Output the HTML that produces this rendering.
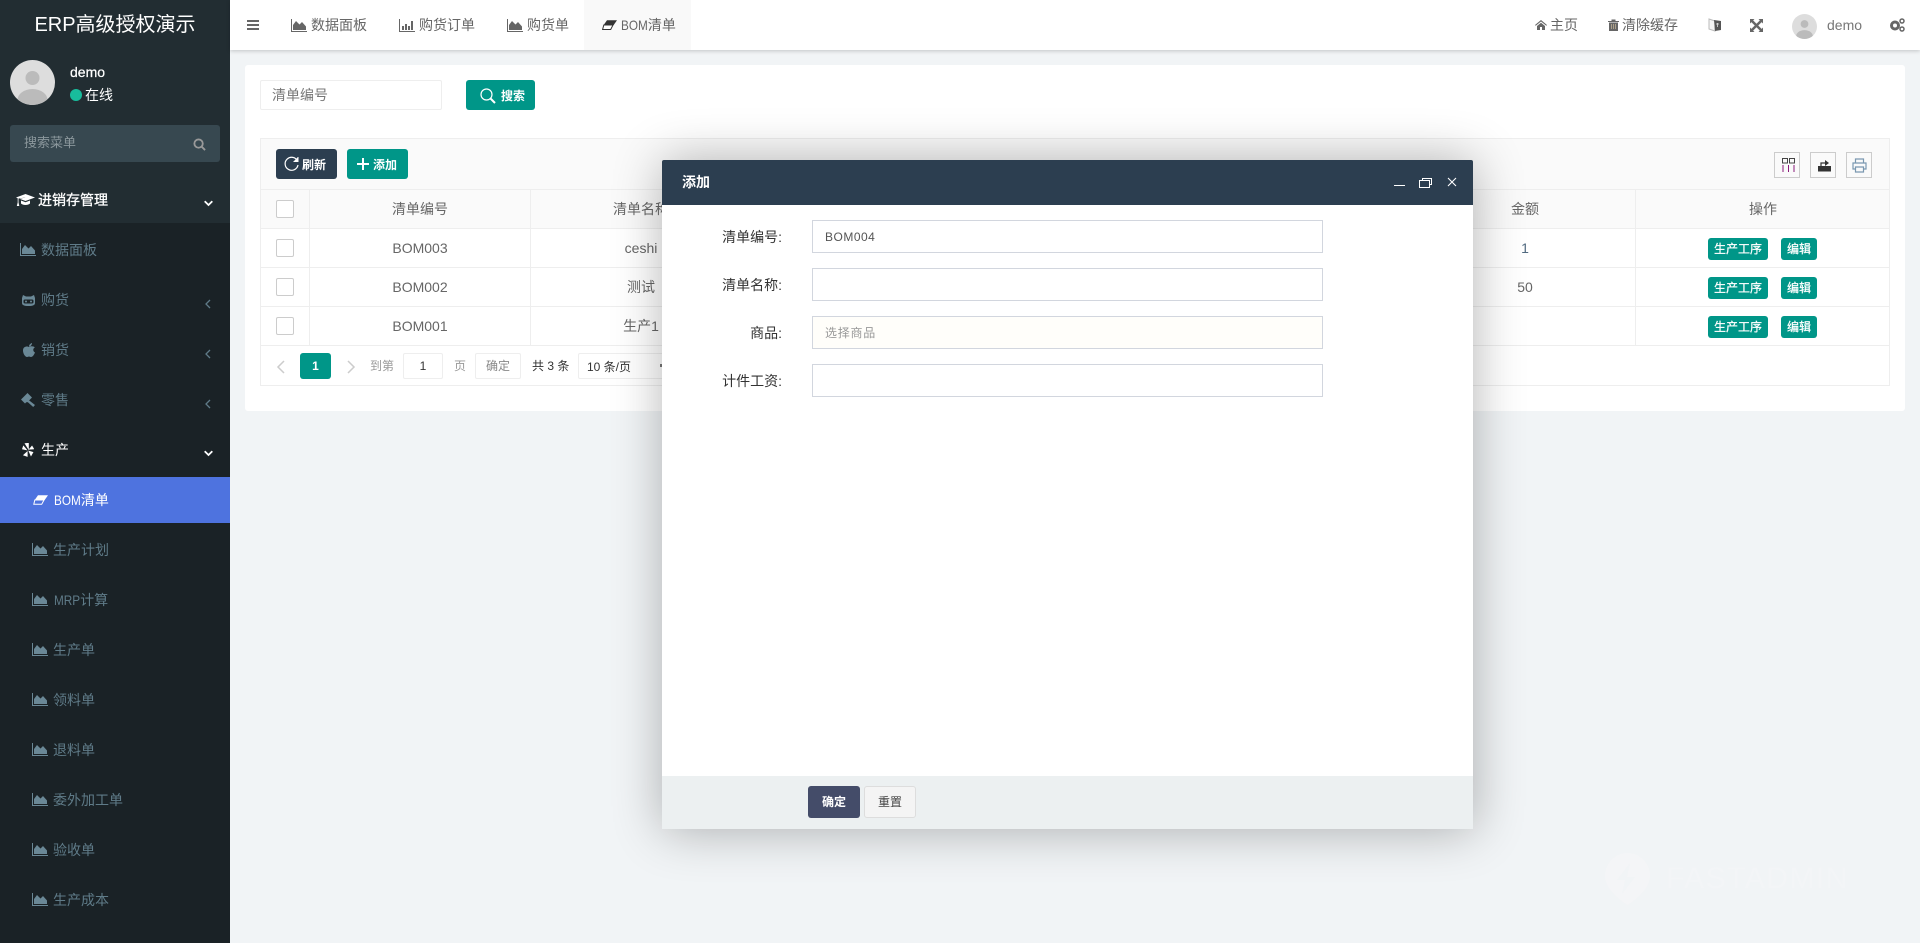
<!DOCTYPE html>
<html lang="zh-CN"><head><meta charset="utf-8"><title>BOM清单</title>
<style>
*{box-sizing:border-box}
html,body{margin:0;padding:0;width:1920px;height:943px;overflow:hidden;background:#f1f4f6;font-family:"Liberation Sans","Noto Sans CJK SC",sans-serif;font-size:14px;color:#666}
.a,.t,svg.i{position:absolute}
.t{white-space:nowrap;line-height:20px;height:20px}
.c{transform:translateX(-50%)}
.m{color:#5f7b88}
.b{font-weight:bold}
.s{display:inline-block;font-size:14px;transform:scaleX(.84);transform-origin:left center;margin-right:-5px}
.btn{position:absolute;border-radius:3px;color:#fff;font-weight:bold;font-size:12px;text-align:center;white-space:nowrap}
.op{position:absolute;border-radius:3px;color:#fff;font-size:12px;text-align:center;white-space:nowrap;height:22px;line-height:22px;background:#009688;-webkit-text-stroke:.25px #fff}
.h{position:absolute;height:1px;background:#eee;left:260px;width:1630px}
.v{position:absolute;width:1px;background:#eee;top:189px;height:156px}
.cb{position:absolute;left:276px;width:18px;height:18px;border:1px solid #ccc;border-radius:2px;background:#fff}
.inp{position:absolute;left:812px;width:511px;height:33px;border:1px solid #d2d6de;background:#fff;padding:0 12px;line-height:33px;font-size:12px;color:#555}
.lab{position:absolute;right:1138px;color:#333;line-height:20px;white-space:nowrap}
.ic{fill:#6a8896}
</style></head><body>
<svg width="0" height="0" style="position:absolute"><defs>
<symbol id="area" viewBox="0 0 16 13"><path d="M0 0h1v12h15v1H0z"/><path d="M2 11V6l3-4 3.500 3.500L11 3l4 4.500V11z"/></symbol>
<symbol id="bars" viewBox="0 0 16 13"><path d="M0 0h1v12h15v1H0z"/><path d="M3 7h2v4H3zM6 5h2v6H6zM9 7h2v4H9zM12 2h2v9h-2z"/></symbol>
</defs></svg>

<!-- sidebar -->
<div class="a" style="left:0;top:0;width:230px;height:223px;background:#222d32"></div>
<div class="a" style="left:0;top:223px;width:230px;height:720px;background:#1a2226"></div>
<div class="t" style="left:115px;top:13px;line-height:24px;height:24px;font-size:20px;color:#fff;transform:translateX(-50%)">ERP高级授权演示</div>
<svg class="i" style="left:10px;top:60px" width="45" height="45" viewBox="0 0 45 45"><defs><clipPath id="cp1"><circle cx="22.500" cy="22.500" r="22.500"/></clipPath></defs><circle cx="22.500" cy="22.500" r="22.500" fill="#dddddd"/><circle cx="22.500" cy="18" r="7" fill="#bbb"/><ellipse cx="22.500" cy="40" rx="15" ry="11" fill="#bbb" clip-path="url(#cp1)"/></svg>
<div class="t" style="left:70px;top:62px;color:#fff;font-size:14px;-webkit-text-stroke:.25px #fff">demo</div>
<div class="a" style="left:70px;top:89px;width:12px;height:12px;border-radius:50%;background:#18bc9c"></div>
<div class="t" style="left:85px;top:85px;color:#fff">在线</div>
<div class="a" style="left:10px;top:125px;width:210px;height:37px;background:#374850;border-radius:3px"></div>
<div class="t" style="left:24px;top:133px;color:#8b979c;font-size:13px">搜索菜单</div>
<svg class="i" style="left:193px;top:138px" width="13" height="13" viewBox="0 0 14 14" fill="none" stroke="#999" stroke-width="2"><circle cx="6" cy="6" r="4.500"/><path d="M9.500 9.500L13 13"/></svg>

<svg class="i" style="left:16px;top:193px" width="19" height="14" viewBox="0 0 19 14" fill="#fff"><path d="M9.500 1L19 4.500 9.500 8 3.500 5.800 9.500 4.500 2.500 5.500 2.500 9.500 3.300 13H.8l.9-3.500V5.200L0 4.500z"/><path d="M5 7.500l4.500 1.700L14 7.500v3c-2 2-7 2-9 0z"/></svg>
<div class="t" style="left:38px;top:190px;color:#fff;-webkit-text-stroke:.3px #fff">进销存管理</div>
<svg class="i" style="left:204px;top:200px" width="9" height="7" viewBox="0 0 9 7" fill="none" stroke="#fff" stroke-width="1.800"><path d="M.7 1.200L4.500 5l3.800-3.800"/></svg>

<svg class="i ic" style="left:20px;top:243px" width="16" height="13"><use href="#area"/></svg>
<div class="t m" style="left:41px;top:240px">数据面板</div>
<svg class="i ic" style="left:22px;top:295px" width="13" height="11" viewBox="0 0 13 11"><path d="M1 0l3 1.500h5L12 0l1 3v5c0 2-2 3-6.500 3S0 10 0 8V3z"/><rect x="1.500" y="4.500" width="10" height="4" rx="1.500" fill="#1a2226"/><circle cx="4" cy="6.500" r="1" /><circle cx="9" cy="6.500" r="1"/></svg>
<div class="t m" style="left:41px;top:290px">购货</div>
<svg class="i" style="left:205px;top:299px" width="6" height="10" viewBox="0 0 6 10" fill="none" stroke="#5f7b88" stroke-width="1.300"><path d="M5 1L1 5l4 4"/></svg>
<svg class="i ic" style="left:23px;top:343px" width="12" height="14" viewBox="0 0 12 14"><path d="M6 4C4.500 3 0 3 0 7.500 0 11 2.500 14 4 14c1 0 1.300-.5 2-.5s1 .5 2 .5c1.500 0 3-2 4-4.500-2-1-2.500-4-.2-5C10.500 3 7.500 3 6 4zM6 3.500C6 2 7.500 .3 9 0c0 2-1.500 3.500-3 3.500z"/></svg>
<div class="t m" style="left:41px;top:340px">销货</div>
<svg class="i" style="left:205px;top:349px" width="6" height="10" viewBox="0 0 6 10" fill="none" stroke="#5f7b88" stroke-width="1.300"><path d="M5 1L1 5l4 4"/></svg>
<svg class="i ic" style="left:21px;top:393px" width="14" height="14" viewBox="0 0 14 14"><path d="M6.500 0l4.500 4.500-5 5L1.500 5zM0 6.500l1.500-1.500 4 4L4 10.500zM7 6.500l7 5.500-1.800 2L5.500 8z"/></svg>
<div class="t m" style="left:41px;top:390px">零售</div>
<svg class="i" style="left:205px;top:399px" width="6" height="10" viewBox="0 0 6 10" fill="none" stroke="#5f7b88" stroke-width="1.300"><path d="M5 1L1 5l4 4"/></svg>
<svg class="i" style="left:22px;top:443px" width="12" height="14" viewBox="0 0 12 14" fill="#fff" stroke="#fff" stroke-width=".6"><path d="M3 .5l3.500-.3 0 6zM6.800 8l4.200 1.300-2 3.500zM5.300 8.700l0 4.800-3.800-1.400zM4.800 7L.4 6 1.400 3zM7.200 6.300L10 3l1.800 3z"/></svg>
<div class="t" style="left:41px;top:440px;color:#fff">生产</div>
<svg class="i" style="left:204px;top:450px" width="9" height="7" viewBox="0 0 9 7" fill="none" stroke="#fff" stroke-width="1.800"><path d="M.7 1.200L4.500 5l3.800-3.800"/></svg>

<div class="a" style="left:0;top:477px;width:230px;height:46px;background:#4e73df"></div>
<svg class="i" style="left:33px;top:495px" width="15" height="10" viewBox="0 0 15 10"><path d="M5 .3h10L11.500 5.200H1.500z" fill="#fff"/><path d="M1.800 5h9.200L8.700 9.300H.8z" fill="none" stroke="#fff" stroke-width="1"/></svg>
<div class="t" style="left:54px;top:490px;color:#fff"><span class="s">BOM</span>清单</div>

<svg class="i ic" style="left:32px;top:543px" width="16" height="13"><use href="#area"/></svg><div class="t m" style="left:53px;top:540px">生产计划</div>
<svg class="i ic" style="left:32px;top:593px" width="16" height="13"><use href="#area"/></svg><div class="t m" style="left:54px;top:590px"><span class="s">MRP</span>计算</div>
<svg class="i ic" style="left:32px;top:643px" width="16" height="13"><use href="#area"/></svg><div class="t m" style="left:53px;top:640px">生产单</div>
<svg class="i ic" style="left:32px;top:693px" width="16" height="13"><use href="#area"/></svg><div class="t m" style="left:53px;top:690px">领料单</div>
<svg class="i ic" style="left:32px;top:743px" width="16" height="13"><use href="#area"/></svg><div class="t m" style="left:53px;top:740px">退料单</div>
<svg class="i ic" style="left:32px;top:793px" width="16" height="13"><use href="#area"/></svg><div class="t m" style="left:53px;top:790px">委外加工单</div>
<svg class="i ic" style="left:32px;top:843px" width="16" height="13"><use href="#area"/></svg><div class="t m" style="left:53px;top:840px">验收单</div>
<svg class="i ic" style="left:32px;top:893px" width="16" height="13"><use href="#area"/></svg><div class="t m" style="left:53px;top:890px">生产成本</div>

<!-- top nav -->
<div class="a" style="left:230px;top:0;width:1690px;height:50px;background:#fff;box-shadow:0 1px 4px rgba(0,0,0,.2)"></div>
<div class="a" style="left:584px;top:0;width:107px;height:50px;background:#f9f9f9"></div>
<svg class="i" style="left:247px;top:20px" width="12" height="10" viewBox="0 0 12 10" fill="#666"><path d="M0 0h12v2H0zM0 4h12v2H0zM0 8h12v2H0z"/></svg>
<svg class="i" style="left:291px;top:19px;fill:#666" width="16" height="13"><use href="#area"/></svg><div class="t" style="left:311px;top:15px">数据面板</div>
<svg class="i" style="left:399px;top:19px;fill:#666" width="16" height="13"><use href="#bars"/></svg><div class="t" style="left:419px;top:15px">购货订单</div>
<svg class="i" style="left:507px;top:19px;fill:#666" width="16" height="13"><use href="#area"/></svg><div class="t" style="left:527px;top:15px">购货单</div>
<svg class="i" style="left:602px;top:20px" width="15" height="10" viewBox="0 0 15 10"><path d="M5 .3h10L11.500 5.200H1.500z" fill="#333"/><path d="M1.800 5h9.200L8.700 9.500H.6z" fill="#fff" stroke="#333" stroke-width="1"/></svg><div class="t" style="left:621px;top:15px"><span class="s">BOM</span>清单</div>

<svg class="i" style="left:1535px;top:20px" width="12" height="10" viewBox="0 0 12 10" fill="#666"><path d="M6 0l6 5-.7.8L6 1.500.7 5.800 0 5zM2 6l4-3.300L10 6v4H7V7H5v3H2z"/></svg>
<div class="t" style="left:1550px;top:15px">主页</div>
<svg class="i" style="left:1608px;top:19px" width="11" height="12" viewBox="0 0 11 12" fill="#666"><path d="M0 2h3.500V0.500h4V2H11v1H0zM1 3.500h9V12H1z"/><path d="M3.500 5v5M5.500 5v5M7.500 5v5" stroke="#c9b99a" stroke-width=".7"/></svg>
<div class="t" style="left:1622px;top:15px">清除缓存</div>
<svg class="i" style="left:1708px;top:18px" width="14" height="14" viewBox="0 0 14 14"><path d="M1 1l6 2v10L1 11z" fill="#f4f4f4" stroke="#bbb"/><path d="M6 2l7 1v9l-6 1z" fill="#555"/><path d="M8 6h3M9.500 5v4" stroke="#ddd" stroke-width=".8"/></svg>
<svg class="i" style="left:1750px;top:19px" width="13" height="13" viewBox="0 0 13 13" fill="#666"><path d="M0 0h4.500L0 4.500zM13 0v4.500L8.500 0zM0 13V8.500L4.500 13zM13 13H8.500L13 8.500z"/><path d="M2 2l9 9M11 2l-9 9" stroke="#666" stroke-width="2.500"/></svg>
<svg class="i" style="left:1792px;top:14px" width="25" height="25" viewBox="0 0 45 45"><circle cx="22.500" cy="22.500" r="22.500" fill="#ddd"/><circle cx="22.500" cy="18" r="7" fill="#bbb"/><ellipse cx="22.500" cy="40" rx="15" ry="11" fill="#bbb" clip-path="url(#cp1)"/></svg>
<div class="t" style="left:1827px;top:15px;font-size:14px;color:#777">demo</div>
<svg class="i" style="left:1890px;top:18px" width="15" height="14" viewBox="0 0 15 14"><circle cx="5" cy="7.500" r="3.500" fill="none" stroke="#666" stroke-width="3"/><circle cx="12" cy="3" r="2" fill="none" stroke="#666" stroke-width="1.500"/><circle cx="12" cy="11" r="2" fill="none" stroke="#666" stroke-width="1.500"/></svg>

<!-- watermark -->
<svg class="i" style="left:1605px;top:853px" width="45" height="52" viewBox="0 0 45 52"><path d="M22.500 0C10 0 0 10 0 23c0 12 13 23 22.500 29C32 46 45 35 45 23 45 10 35 0 22.500 0z" fill="#f4f5f7"/><path d="M25 10L12 27h8l-3 14 13-17h-8z" fill="#f1f4f6"/></svg>
<div class="t" style="left:1666px;top:863px;height:32px;line-height:32px;font-size:30px;letter-spacing:1.500px;color:#f3f5f7">FASTADMIN</div>

<!-- panel -->
<div class="a" style="left:245px;top:65px;width:1660px;height:346px;background:#fff;border-radius:3px"></div>
<div class="a" style="left:260px;top:80px;width:182px;height:30px;border:1px solid #eee;border-radius:2px"></div>
<div class="t" style="left:272px;top:85px;color:#777">清单编号</div>
<div class="btn" style="left:466px;top:80px;width:69px;height:30px;background:#009688"></div>
<svg class="i" style="left:480px;top:88px" width="16" height="16" viewBox="0 0 16 16" fill="none" stroke="#fff"><circle cx="6.500" cy="6.500" r="5.500" stroke-width="1.200"/><path d="M10.500 10.500L15 15" stroke-width="2"/></svg>
<div class="t b" style="left:501px;top:86px;font-size:12px;color:#fff">搜索</div>

<!-- table -->
<div class="a" style="left:260px;top:138px;width:1630px;height:248px;border:1px solid #eee;background:#fff"></div>
<div class="a" style="left:261px;top:139px;width:1628px;height:89px;background:#fafafa"></div>
<div class="h" style="top:189px"></div><div class="h" style="top:228px"></div><div class="h" style="top:267px"></div><div class="h" style="top:306px"></div><div class="h" style="top:345px"></div>
<div class="v" style="left:309px"></div><div class="v" style="left:530px"></div><div class="v" style="left:1635px"></div>

<div class="btn" style="left:276px;top:149px;width:61px;height:30px;background:#2c3e50"></div>
<svg class="i" style="left:284px;top:156px" width="15" height="16" viewBox="0 0 15 16" fill="none" stroke="#fff" stroke-width="1.200"><path d="M13.500 5A6.500 6.500 0 1 0 14 9"/><path d="M14 1v4.500H9.500" stroke-width="1" fill="#fff"/></svg>
<div class="t b" style="left:302px;top:155px;font-size:12px;color:#fff">刷新</div>
<div class="btn" style="left:347px;top:149px;width:61px;height:30px;background:#009688"></div>
<svg class="i" style="left:357px;top:158px" width="12" height="12" viewBox="0 0 12 12" fill="#fff"><path d="M5 0h2v5h5v2H7v5H5V7H0V5h5z"/></svg>
<div class="t b" style="left:373px;top:155px;font-size:12px;color:#fff">添加</div>

<div class="a" style="left:1774px;top:152px;width:26px;height:26px;border:1px solid #ccc"></div>
<svg class="i" style="left:1782px;top:158px" width="13" height="14" viewBox="0 0 13 14" fill="none" stroke="#444"><path d="M.5.500h5v4.500h-5zM7.500.500h5v4.500h-5z"/><path d="M1 7v7M6.500 7v7M12 7v7" stroke="#8a1a7a"/></svg>
<div class="a" style="left:1810px;top:152px;width:26px;height:26px;border:1px solid #ccc"></div>
<svg class="i" style="left:1818px;top:159px" width="13" height="13" viewBox="0 0 13 13"><path d="M0 7h13v5.500H0z" fill="#333"/><path d="M3 7V4h4" fill="none" stroke="#333" stroke-width="1.200"/><path d="M7 1l4 3-4 3z" fill="#333"/></svg>
<div class="a" style="left:1846px;top:152px;width:26px;height:26px;border:1px solid #ccc"></div>
<svg class="i" style="left:1852px;top:158px" width="15" height="15" viewBox="0 0 15 15" fill="none" stroke="#7a98b0" stroke-width="1.200"><path d="M3.500 5V1h8v4M3.500 11H1V5h13v6h-2.500M3.500 9h8v5h-8z"/></svg>

<div class="cb" style="top:200px"></div><div class="cb" style="top:239px"></div><div class="cb" style="top:278px"></div><div class="cb" style="top:317px"></div>
<div class="t c" style="left:420px;top:199px">清单编号</div>
<div class="t c" style="left:641px;top:199px">清单名称</div>
<div class="t c" style="left:1525px;top:199px">金额</div>
<div class="t c" style="left:1763px;top:199px">操作</div>
<div class="t c" style="left:420px;top:238px">BOM003</div><div class="t c" style="left:641px;top:238px">ceshi</div><div class="t c" style="left:1525px;top:238px;color:#516a80">1</div>
<div class="t c" style="left:420px;top:277px">BOM002</div><div class="t c" style="left:641px;top:277px">测试</div><div class="t c" style="left:1525px;top:277px">50</div>
<div class="t c" style="left:420px;top:316px">BOM001</div><div class="t c" style="left:641px;top:316px">生产1</div>

<div class="op" style="left:1708px;top:238px;width:60px">生产工序</div><div class="op" style="left:1781px;top:238px;width:36px">编辑</div>
<div class="op" style="left:1708px;top:277px;width:60px">生产工序</div><div class="op" style="left:1781px;top:277px;width:36px">编辑</div>
<div class="op" style="left:1708px;top:316px;width:60px">生产工序</div><div class="op" style="left:1781px;top:316px;width:36px">编辑</div>

<!-- pagination -->
<svg class="i" style="left:276px;top:360px" width="10" height="14" viewBox="0 0 10 14" fill="none" stroke="#ccc" stroke-width="1.500"><path d="M8 1L2 7l6 6"/></svg>
<div class="btn" style="left:300px;top:353px;width:31px;height:26px;line-height:26px;background:#009688">1</div>
<svg class="i" style="left:346px;top:360px" width="10" height="14" viewBox="0 0 10 14" fill="none" stroke="#ccc" stroke-width="1.500"><path d="M2 1l6 6-6 6"/></svg>
<div class="t" style="left:370px;top:356px;font-size:12px;color:#999">到第</div>
<div class="a" style="left:403px;top:353px;width:40px;height:26px;border:1px solid #eee;border-radius:2px;text-align:center;line-height:24px;font-size:12px;color:#333">1</div>
<div class="t" style="left:454px;top:356px;font-size:12px;color:#999">页</div>
<div class="a" style="left:475px;top:353px;width:46px;height:26px;border:1px solid #eee;border-radius:2px;text-align:center;line-height:24px;font-size:12px;color:#888">确定</div>
<div class="t" style="left:532px;top:356px;font-size:12px;color:#333">共 3 条</div>
<div class="a" style="left:578px;top:353px;width:94px;height:26px;border:1px solid #eee;border-radius:2px;padding-left:8px;line-height:26px;font-size:12px;color:#333">10 条/页</div>
<div class="a" style="left:660px;top:364px;width:2px;height:3px;background:#777"></div>

<!-- modal -->
<div class="a" style="left:662px;top:160px;width:811px;height:669px;background:#fff;box-shadow:1px 1px 50px rgba(0,0,0,.3);border-radius:2px"></div>
<div class="a" style="left:662px;top:160px;width:811px;height:45px;background:#2c3e50;border-radius:2px 2px 0 0"></div>
<div class="t b" style="left:682px;top:172px;color:#fff">添加</div>
<div class="a" style="left:1394px;top:185px;width:11px;height:1px;background:#fff"></div>
<div class="a" style="left:1422px;top:178px;width:10px;height:7px;border:1px solid #fff"></div>
<div class="a" style="left:1419px;top:180px;width:11px;height:8px;border:1px solid #fff;background:#2c3e50"></div>
<svg class="i" style="left:1447px;top:177px" width="10" height="10" viewBox="0 0 10 10" stroke="#fff" stroke-width="1.100"><path d="M1 1l8 8M9 1L1 9"/></svg>

<div class="lab" style="top:227px">清单编号:</div>
<div class="lab" style="top:275px">清单名称:</div>
<div class="lab" style="top:323px">商品:</div>
<div class="lab" style="top:371px">计件工资:</div>
<div class="inp" style="top:220px;letter-spacing:.5px">BOM004</div>
<div class="inp" style="top:268px"></div>
<div class="inp" style="top:316px;color:#999;background:#fffefa;letter-spacing:.75px">选择商品</div>
<div class="inp" style="top:364px"></div>

<div class="a" style="left:662px;top:776px;width:811px;height:53px;background:#ecf0f1"></div>
<div class="btn" style="left:808px;top:786px;width:52px;height:32px;line-height:32px;background:#444c69;font-size:12px">确定</div>
<div class="a" style="left:864px;top:786px;width:52px;height:32px;line-height:30px;background:#f4f4f4;border:1px solid #ddd;border-radius:3px;text-align:center;font-size:12px;color:#444">重置</div>
</body></html>
